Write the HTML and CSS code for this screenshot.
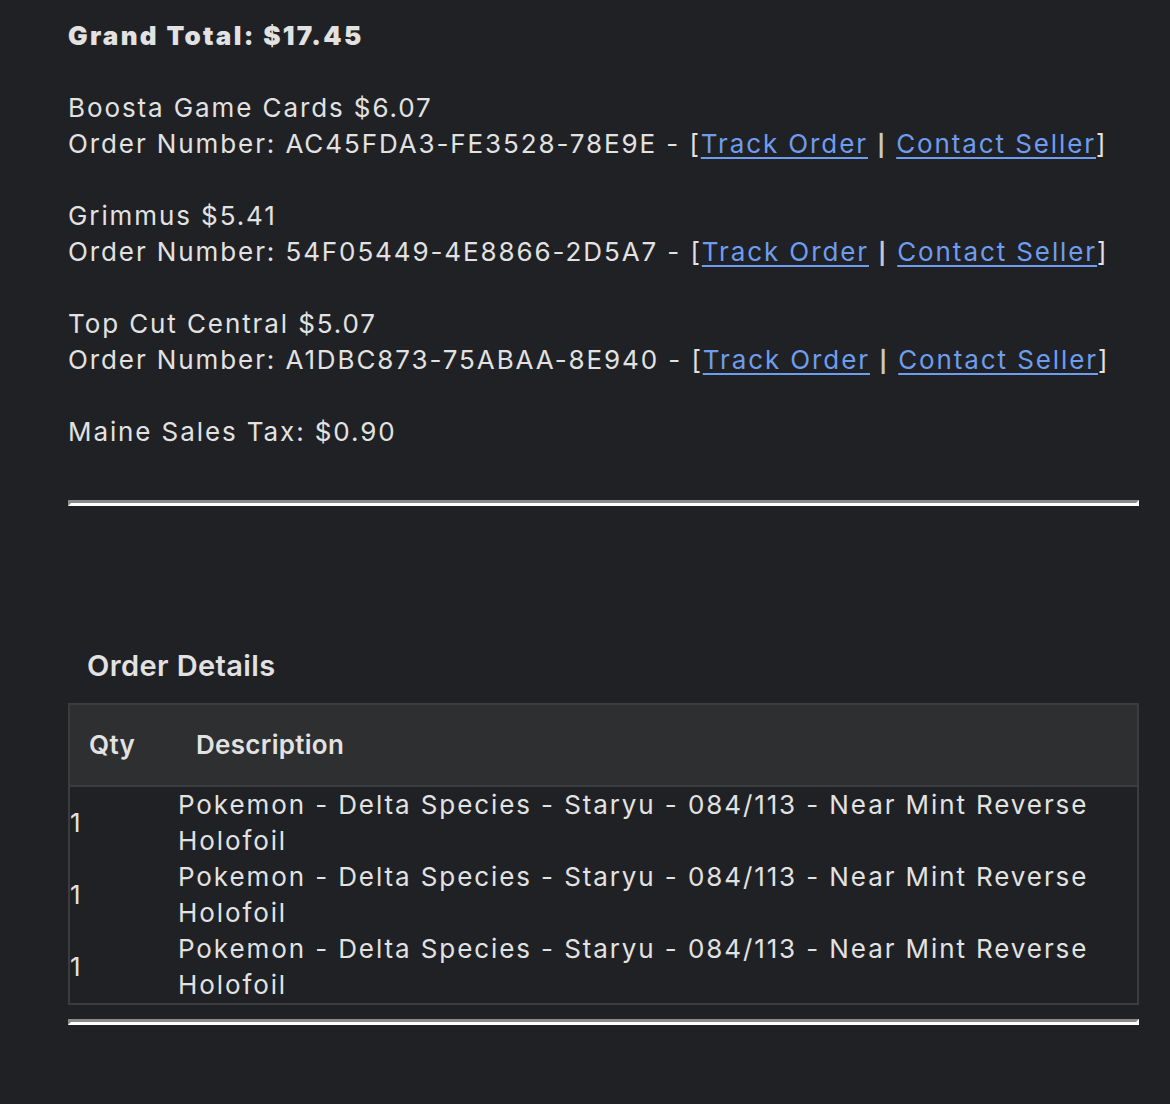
FILE: index.html
```
<!DOCTYPE html>
<html lang="en">
<head>
<meta charset="utf-8">
<title>Order Summary</title>
<link rel="stylesheet" href="styles.css">
</head>
<body>
<div class="page">
  <div class="summary">
    <p class="grand">Grand Total: $17.45</p>
    <p>Boosta Game Cards $6.07<br>Order Number: AC45FDA3-FE3528-78E9E - [<a href="#">Track Order</a> <span class="sep">|</span> <a href="#">Contact Seller</a>]</p>
    <p>Grimmus $5.41<br>Order Number: 54F05449-4E8866-2D5A7 - [<a href="#">Track Order</a> <span class="sep">|</span> <a href="#">Contact Seller</a>]</p>
    <p>Top Cut Central $5.07<br>Order Number: A1DBC873-75ABAA-8E940 - [<a href="#">Track Order</a> <span class="sep">|</span> <a href="#">Contact Seller</a>]</p>
    <p>Maine Sales Tax: $0.90</p>
  </div>
  <hr class="rule rule-top">
  <section class="details">
    <h2 class="details-title">Order Details</h2>
    <table class="items">
      <thead>
        <tr><th class="qty-h">Qty</th><th class="desc-h">Description</th></tr>
      </thead>
      <tbody>
        <tr><td class="qty">1</td><td class="desc">Pokemon - Delta Species - Staryu - 084/113 - Near Mint Reverse Holofoil</td></tr>
        <tr><td class="qty">1</td><td class="desc">Pokemon - Delta Species - Staryu - 084/113 - Near Mint Reverse Holofoil</td></tr>
        <tr><td class="qty">1</td><td class="desc">Pokemon - Delta Species - Staryu - 084/113 - Near Mint Reverse Holofoil</td></tr>
      </tbody>
    </table>
  </section>
  <hr class="rule rule-bottom">
</div>
</body>
</html>
```

FILE: styles.css
```
html, body {
  margin: 0;
  padding: 0;
  background: #202125;
}

body {
  color: #e2e2e2;
  font-family: Inter, "Noto Sans", "Liberation Sans", sans-serif;
  font-size: 26px;
  line-height: 36px;
  letter-spacing: 1.9px;
}

.page {
  margin: 0 31px 0 68px;
  padding-top: 18px;
  padding-bottom: 60px;
}

.summary p {
  margin: 0 0 36px 0;
}

.summary p:last-child {
  margin-bottom: 0;
}

.summary .grand {
  font-weight: 900;
  letter-spacing: 2.3px;
}

.summary a {
  color: #6e9def;
  text-decoration: underline;
  text-underline-offset: 4px;
  text-decoration-thickness: 2px;
}

.summary .sep {
  color: #c8c8c8;
  font-size: 21px;
  line-height: 1;
  font-weight: 700;
  letter-spacing: 2px;
}

.rule {
  height: 0;
  margin: 0;
  border-style: solid;
  border-width: 3px;
  border-top-color: #8a8a8a;
  border-left-color: #8a8a8a;
  border-bottom-color: #ffffff;
  border-right-color: #ffffff;
}

.rule-top {
  margin-top: 50px;
}

.details {
  margin-top: 142px;
}

.details-title {
  margin: 0 0 19px 19px;
  font-size: 29px;
  line-height: 36px;
  font-weight: 600;
  letter-spacing: 0.4px;
  color: #e2e2e2;
}

.items {
  width: 100%;
  border-collapse: collapse;
  border: 2px solid #3c3c3f;
}

.items thead tr {
  background: #2e2f31;
  border-bottom: 2px solid #3c3c3f;
}

.items th {
  height: 80px;
  padding: 0 20px;
  text-align: left;
  font-size: 26px;
  font-weight: 600;
  letter-spacing: 0.3px;
  color: #e2e2e2;
}

.items th.qty-h {
  width: 66px;
  padding-left: 19px;
  padding-right: 21px;
}

.items td {
  padding: 0;
  vertical-align: middle;
}

.items td.qty {
  padding-left: 0;
}

.items td.desc {
  padding-left: 2px;
  padding-right: 20px;
}

.rule-bottom {
  margin-top: 14px;
}
```
